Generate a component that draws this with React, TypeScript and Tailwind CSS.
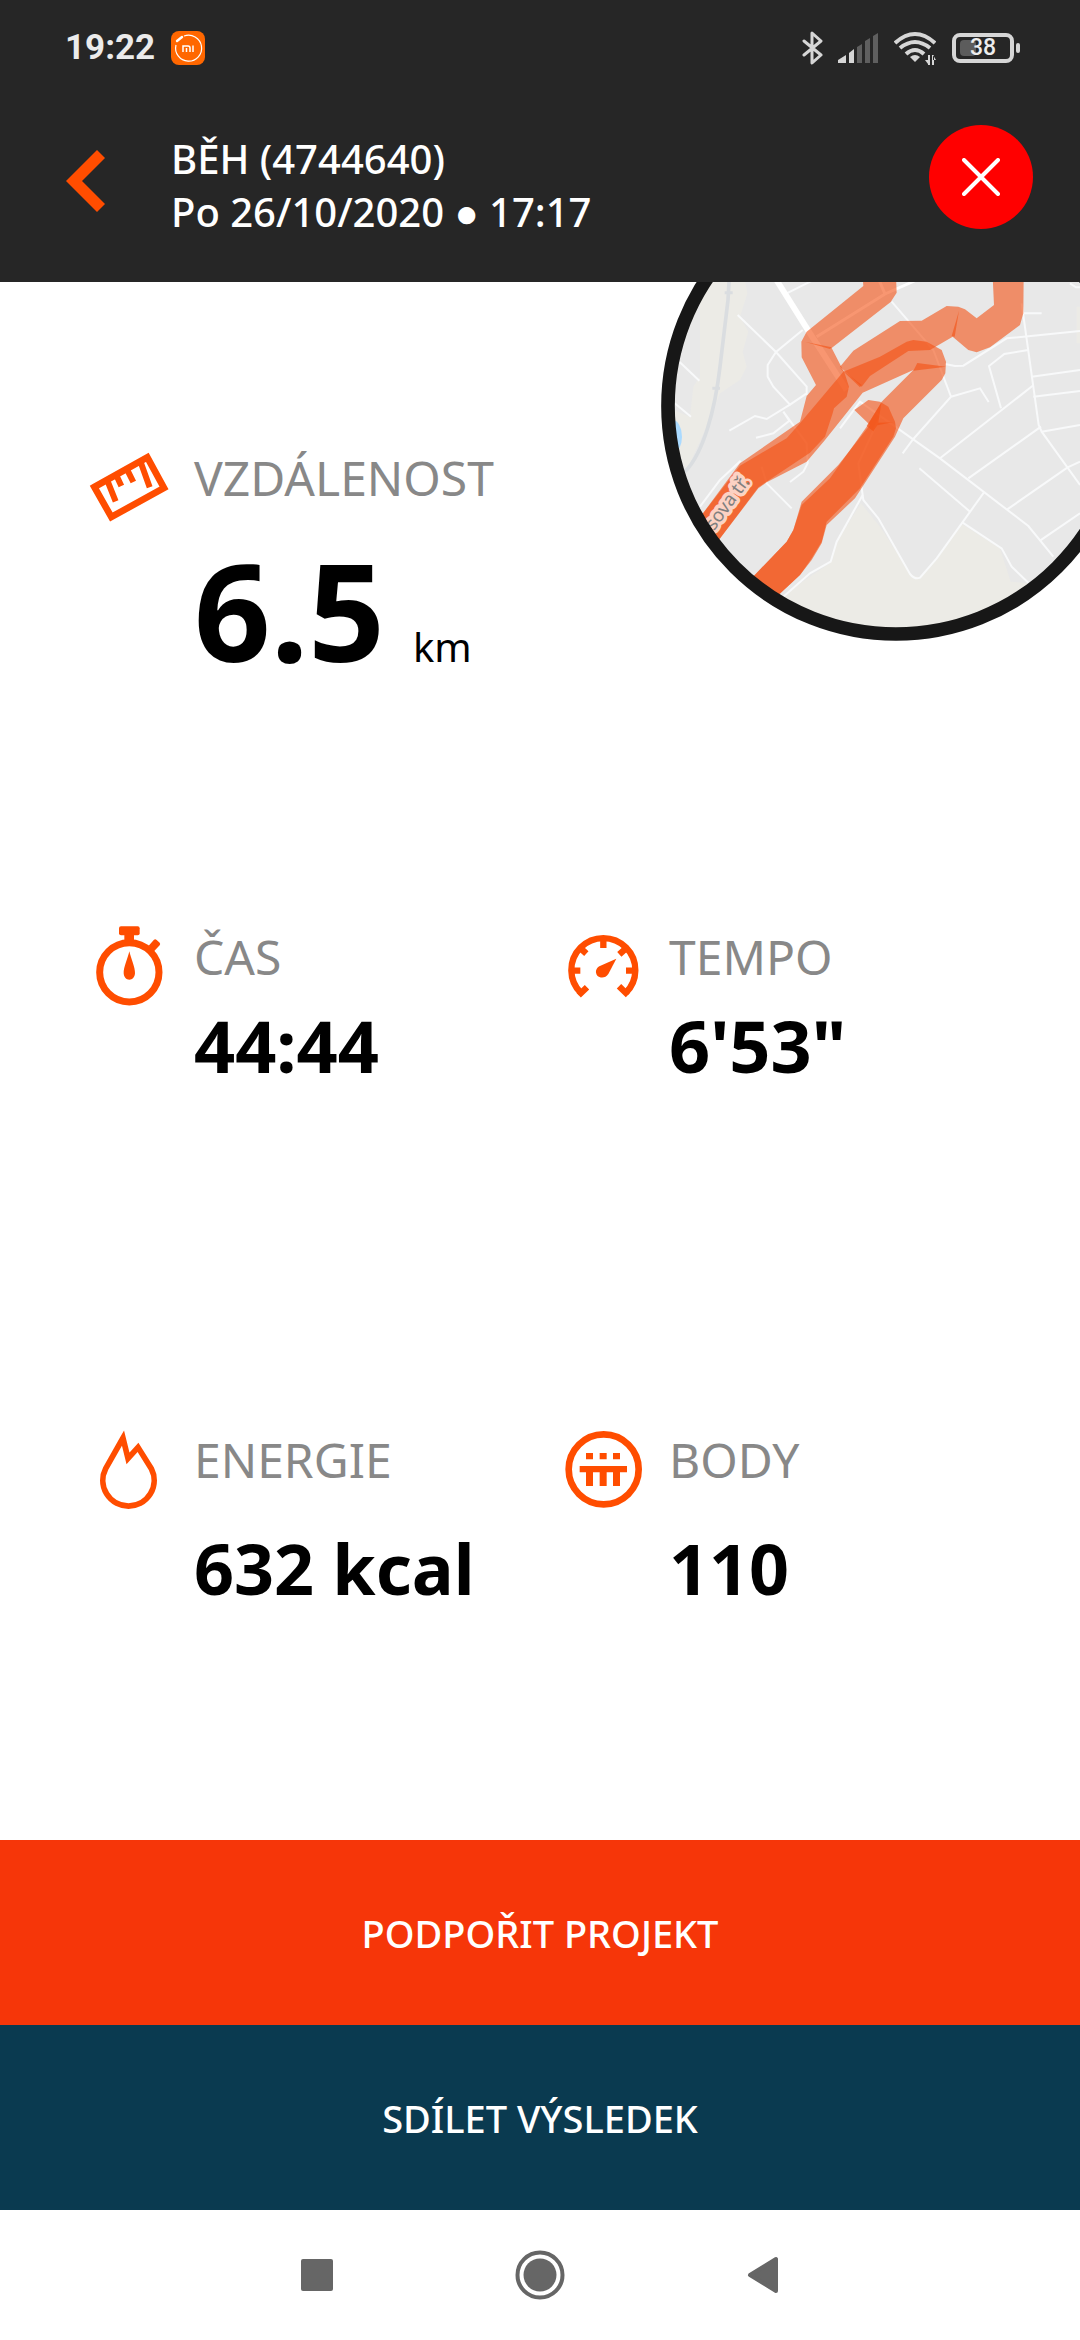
import React from 'react';

interface StatProps {
  label: string;
  value: string;
  icon: React.ReactNode;
  valueClassName: string;
}

function Stat({ label, value, icon, valueClassName }: StatProps) {
  return (
    <div className="flex items-start gap-6">
      {icon}
      <dl>
        <dt className="text-[48px] leading-[60px] text-[#888888]">{label}</dt>
        <dd className={valueClassName}>{value}</dd>
      </dl>
    </div>
  );
}

const iconClass = 'h-[84px] w-20 shrink-0 overflow-visible text-[#ff4d00]';

function RulerIcon() {
  return (
    <svg viewBox="60 84 240 252" className={iconClass} fill="none" stroke="currentColor" aria-hidden="true">
      <path d="M73 201 L232 112 L282 204 L124 291 Z" strokeWidth="20" />
      <path d="M111 179 L137 244 M139 166 L154 198 M171 148 L190 186 M213 129 L239 202" strokeWidth="18" />
    </svg>
  );
}

function StopwatchIcon() {
  return (
    <svg viewBox="60 78 240 252" className={iconClass} aria-hidden="true">
      <circle cx="178" cy="214" r="89" fill="none" stroke="currentColor" strokeWidth="21" />
      <rect x="147" y="76" width="62" height="27" rx="6" fill="currentColor" />
      <path d="M163 98 H192 V122 H163 Z" fill="currentColor" />
      <path d="M236 134 L252 116 Q256 113 260 117 L269 125 Q272 129 269 133 L250 153 Z" fill="currentColor" />
      <path d="M178 151 C182 170 196 200 195 217 C194 229 187 236 178 236 C169 236 162 229 161 217 C160 200 174 170 178 151 Z" fill="currentColor" />
    </svg>
  );
}

function GaugeIcon() {
  return (
    <svg viewBox="75 78 240 252" className={iconClass} aria-hidden="true">
      <g fill="none" stroke="currentColor" strokeWidth="19">
        <path d="M123 276 A96 96 0 1 1 257 276" />
        <path d="M190 110 V141 M94 209 H121 M258 209 H286 M122 142 L139 158 M258 142 L238 160" />
        <path d="M116 283 L141 259 M264 282 L237 256" />
      </g>
      <path d="M229 173 L205 219 C197 232 180 232 172 224 C164 214 168 202 178 196 Z" fill="currentColor" />
    </svg>
  );
}

function FlameIcon() {
  return (
    <svg viewBox="60 87 240 252" className={iconClass} fill="none" stroke="currentColor" strokeWidth="17" strokeMiterlimit="10" aria-hidden="true">
      <path d="M159 111 L107 203 A77 77 0 1 0 244 203 L204 139 L174 172 Z" />
    </svg>
  );
}

function PointsIcon() {
  return (
    <svg viewBox="75 87 240 252" className={iconClass} aria-hidden="true">
      <circle cx="191" cy="205" r="105" fill="none" stroke="currentColor" strokeWidth="20" />
      <path
        d="M138 156h21v19h-21z M179 156h21v19h-21z M219 156h21v19h-21z M119 195h142v19h-21v41h-21v-41h-19v41h-21v-41h-20v41h-21v-41h-19z"
        fill="currentColor"
      />
    </svg>
  );
}

function StatusIcons() {
  return (
    <div className="flex items-center text-[#d6d6d6]">
      <svg viewBox="0 0 22 34" className="mr-3.5 h-[34px] w-[22px]" fill="none" stroke="currentColor" strokeWidth="3" strokeLinejoin="round" strokeLinecap="round" aria-label="Bluetooth">
        <path d="M2 10 L19 24 L10 32 V2 L19 10 L2 24" />
      </svg>
      <svg viewBox="0 0 40 30" className="mr-4 h-[30px] w-10" aria-label="Signal">
        <path d="M0 30 V27 L8 22 V30 Z M11 30 V20 L16 16 V30 Z" fill="currentColor" />
        <path d="M19 30 V14 L24 11 V30 Z M27 30 V8 L32 5 V30 Z M35 30 V3 L40 0 V30 Z" fill="#5f5f5f" />
      </svg>
      <svg viewBox="0 0 42 34" className="mr-4 h-[34px] w-[42px]" aria-label="Wi-Fi">
        <g fill="none" stroke="currentColor" strokeWidth="4">
          <path d="M1 12 Q21 -6 41 12" />
          <path d="M6 17 Q21 5 36 17" />
          <path d="M12 23 Q21 15 30 23" />
        </g>
        <path d="M16 26 Q21 22 26 26 L21 31 Z" fill="currentColor" />
        <path d="M34 24 V34 H36 V24 Z M31 29 H34 V33 Z M38 24 V34 H40 V24 Z M39 24 L42 29 H39 Z" fill="currentColor" />
      </svg>
      <div className="relative flex h-[30px] w-[62px] items-center justify-center rounded-lg border-4 border-[#d6d6d6]">
        <span className="absolute left-1 h-4 w-4 rounded bg-[#5c5c5c]" />
        <span className="relative font-[Roboto] text-[23px] leading-6 font-medium text-[#ededed]">38</span>
      </div>
      <span className="ml-0.5 h-2.5 w-1 rounded-sm bg-[#d6d6d6]" />
    </div>
  );
}

function RouteMap() {
  return (
    <svg viewBox="63 -297 1410 1410" className="h-[470px] w-[470px]" role="img" aria-label="Mapa trasy">
      <clipPath id="map-clip">
        <circle cx="768" cy="408" r="668" />
      </clipPath>
      <g clipPath="url(#map-clip)">
        <rect x="63" y="-297" width="1410" height="1410" fill="#e8e8e8" />

        {/* Parks and water */}
        <g fill="#ecebe6">
          <path d="M180 0 H310 L322 70 L300 140 L325 185 L308 245 L320 290 L300 330 L240 370 L200 470 L140 600 L90 500 L100 420 L150 440 L160 350 L180 320 Z" />
          <path d="M663 700 L720 770 L815 915 L840 922 L890 870 L965 762 L1080 835 L1112 935 L1165 940 L1165 1113 H420 L430 975 L510 920 L570 880 L590 815 Z" />
          <path d="M1310 110 H1400 V220 H1310 Z" />
        </g>
        <ellipse cx="98" cy="500" rx="28" ry="50" fill="#aadaff" />

        {/* Railway */}
        <path d="M269 0 L264 90 L240 290 C225 420 190 550 135 605" fill="none" stroke="#dadde0" strokeWidth="11" />
        <path d="M254 68 H278 M217 355 H240" stroke="#dadde0" strokeWidth="9" />

        {/* Streets */}
        <g fill="none" stroke="#f8f9fa" strokeWidth="6">
          <path d="M440 70 L530 25 M293 135 L408 246 L500 350 V375 M488 180 L408 246 L383 285 V320 L400 350 L450 404 L500 370" />
          <path d="M450 404 L380 447 L345 438 L268 482 M430 425 L448 452 L400 490 L348 503 M430 425 L500 520 L503 580 L490 605 L450 636" />
          <path d="M118 275 L178 332 M104 400 L153 440 M180 710 L240 630 L302 572 M365 590 L380 640 L455 715" />
          <path d="M755 95 L880 240 L933 380 L820 507 L788 550 M933 380 L1020 355 L1046 396" />
          <path d="M915 282 L945 288 L970 287 L1100 205 L1320 183 M1150 130 H1205" />
          <path d="M600 475 L660 395 L900 565 L1165 768 L1240 860 M1145 100 L1196 465 L1205 485 L1320 645" />
          <path d="M1180 346 L900 565 M1203 470 L985 625 M1283 592 L1102 718 M1320 730 L1200 812 M1205 485 L1320 465 M1180 380 L1320 363 M1175 320 L1320 300 M1283 592 L1320 575" />
          <path d="M838 595 L990 725 M1032 667 L890 865 L840 923 Q825 930 810 912 L715 745 L670 690 L655 580 L720 440" />
          <path d="M968 758 L1085 835 L1115 890 L1165 938 M668 675 L590 815 L572 875 L510 910 L430 980" />
          <path d="M1165 240 L1093 252 L1047 288 L1083 415 M1290 40 L1308 52 H1330" />
        </g>
        <path d="M400 15 L510 190 L620 360" fill="none" stroke="#ffffff" strokeWidth="18" />
        <path d="M530 200 L735 72 L830 30 M715 25 L735 72" fill="none" stroke="#ffffff" strokeWidth="9" />

        {/* Recorded run */}
        <g fill="#f35012" fillOpacity="0.6">
          <path d="M668 20 L670 48 L500 185 L484 215 L485 262 L528 345 L500 378 L480 455 L300 580 L170 755 L225 825 L355 652 L510 548 L555 500 L578 430 L582 415 L620 380 L627 350 L614 310 L575 234 L752 96 L770 68 L768 20 Z" />
          <path d="M170 755 L300 587 L440 505 L480 460 L610 305 L720 260 L800 215 L820 210 L860 215 L905 240 L918 275 L916 310 L905 330 L790 445 L765 500 L645 685 L560 765 L545 820 L515 870 L480 915 L405 985 L330 930 L440 815 L460 780 L485 705 L570 625 L680 470 L725 395 L820 300 L668 368 L555 510 L500 575 L380 637 L355 655 L225 825 Z" />
          <path d="M1058 20 L1062 105 L1010 145 L975 118 L955 110 L920 108 L845 152 L780 153 L640 242 L600 290 L665 350 L690 318 L805 243 L870 240 L938 200 L985 240 L1010 247 L1050 232 L1140 165 L1150 130 L1151 20 Z" />
          <path d="M643 420 L685 390 L720 395 L745 410 L765 455 L768 475 L760 500 L660 655 L560 755 L545 815 L515 865 L480 915 L405 985 L330 930 L440 815 L460 780 L485 695 L595 585 L690 465 Z" />
          <path d="M957 122 L935 198 L944 200 Z M497 216 L575 232 L570 237 Z M597 292 L665 345 L660 352 Z M820 302 L832 279 L918 290 Z M724 398 L680 468 L700 484 L712 466 L758 457 L715 458 Z" />
        </g>

        <text
          transform="translate(222 784) rotate(-54)"
          className="font-['Noto_Sans']"
          fontSize="56"
          fill="#808080"
          stroke="#fcd2c3"
          strokeWidth="22"
          strokeLinejoin="round"
          paintOrder="stroke"
        >
          sova tř.
        </text>
      </g>
      <circle cx="768" cy="408" r="684" fill="none" stroke="#171717" strokeWidth="41" />
    </svg>
  );
}

export default function App() {
  return (
    <div className="flex min-h-screen flex-col overflow-hidden bg-white font-['Noto_Sans',sans-serif] text-black">
      <header className="relative z-10 bg-[#262626] text-white">
        {/* Status bar */}
        <div className="flex h-24 items-center justify-between pr-[60px] pl-[65px]">
          <div className="flex items-center gap-4">
            <span className="font-[Roboto] text-[35px] leading-10 font-bold text-[#ebebeb]">19:22</span>
            <svg viewBox="0 0 34 34" className="h-[34px] w-[34px]" aria-label="Mi">
              <rect width="34" height="34" rx="8" fill="#ff6700" />
              <path d="M13 5 A13 13 0 1 1 5 14" fill="none" stroke="#ffffff" strokeWidth="1.2" />
              <path d="M6 10 L11 6" stroke="#ffffff" strokeWidth="2.4" strokeLinecap="round" />
              <path d="M12 21 V15 H17 Q19 15 19 17 V21 M15.500 17 V21 M22 14.500 V21" fill="none" stroke="#ffffff" strokeWidth="1.5" />
            </svg>
          </div>
          <StatusIcons />
        </div>

        {/* Activity title */}
        <div className="flex h-[186px] items-start pr-[47px] pl-[66px]">
          <button type="button" aria-label="Zpět" className="mt-[54px]">
            <svg viewBox="0 0 39 62" className="h-[62px] w-[39px]" fill="#ff4d00">
              <path d="M31 0 L39 8 L16 31 L39 54 L31 62 L0 31 Z" />
            </svg>
          </button>
          <h1 className="mt-9 ml-[66px] flex-1 text-[40px] leading-[53px] font-medium">
            BĚH (4744640)
            <br />
            Po 26/10/2020 ● 17:17
          </h1>
          <button type="button" aria-label="Zavřít" className="mt-[29px] flex h-[104px] w-[104px] items-center justify-center rounded-full bg-[#ff0000]">
            <svg viewBox="0 0 38 38" className="h-[38px] w-[38px]" stroke="#ffffff" strokeWidth="4" strokeLinecap="round">
              <path d="M2 2 L36 36 M36 2 L2 36" />
            </svg>
          </button>
        </div>
      </header>

      <main className="relative flex-1 pt-[166px] pr-10 pl-[90px]">
        <div className="absolute -top-[111px] -right-[51px]">
          <RouteMap />
        </div>

        <div className="flex items-start gap-6">
          <RulerIcon />
          <dl>
            <dt className="text-[48px] leading-[60px] text-[#888888]">VZDÁLENOST</dt>
            <dd className="mt-9 flex items-baseline gap-7">
              <span className="text-[134px] leading-[132px] font-bold">6.5</span>
              <span className="text-[40px]">km</span>
            </dd>
          </dl>
        </div>

        <div className="mt-[250px] grid grid-cols-2">
          <Stat label="ČAS" value="44:44" icon={<StopwatchIcon />} valueClassName="mt-[22px] text-[72px] leading-[72px] font-bold" />
          <Stat label="TEMPO" value={'6\'53"'} icon={<GaugeIcon />} valueClassName="mt-[22px] text-[72px] leading-[72px] font-bold" />
        </div>

        <div className="mt-[349px] grid grid-cols-2">
          <Stat label="ENERGIE" value="632 kcal" icon={<FlameIcon />} valueClassName="mt-[42px] text-[70px] leading-[72px] font-bold" />
          <Stat label="BODY" value="110" icon={<PointsIcon />} valueClassName="mt-[42px] text-[70px] leading-[72px] font-bold" />
        </div>
      </main>

      <footer className="flex flex-col">
        <button type="button" className="h-[185px] bg-[#f63609] text-[38px] leading-[52px] font-medium text-white">
          PODPOŘIT PROJEKT
        </button>
        <button type="button" className="h-[185px] bg-[#0a3a50] text-[38px] leading-[52px] font-medium text-white">
          SDÍLET VÝSLEDEK
        </button>

        {/* System navigation */}
        <nav className="flex h-[130px] items-center justify-center gap-[182px] text-[#666666]">
          <button type="button" aria-label="Poslední aplikace" className="h-8 w-8 rounded-xs bg-[#666666]" />
          <button type="button" aria-label="Domů">
            <svg viewBox="0 0 50 50" className="h-[50px] w-[50px]">
              <circle cx="25" cy="25" r="22.500" fill="none" stroke="currentColor" strokeWidth="4" />
              <circle cx="25" cy="25" r="16.500" fill="currentColor" />
            </svg>
          </button>
          <button type="button" aria-label="Zpět v systému">
            <svg viewBox="0 0 32 38" className="h-[38px] w-8">
              <path d="M3 19 L29 3 V35 Z" fill="currentColor" stroke="currentColor" strokeWidth="4" strokeLinejoin="round" />
            </svg>
          </button>
        </nav>
      </footer>
    </div>
  );
}
